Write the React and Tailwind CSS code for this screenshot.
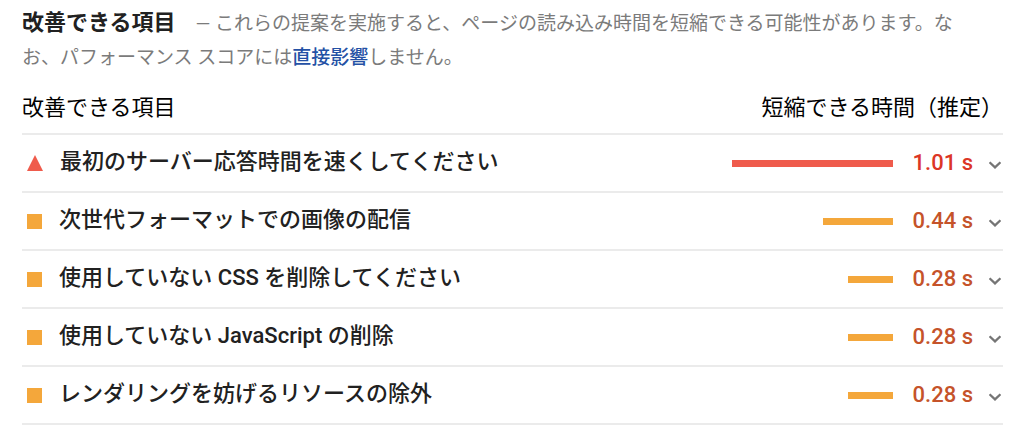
import React, { useState } from 'react';

const opportunities = [
  { id: 'server-response-time', title: '最初のサーバー応答時間を速くしてください', seconds: 1.01, level: 'fail' },
  { id: 'modern-image-formats', title: '次世代フォーマットでの画像の配信', seconds: 0.44, level: 'average' },
  { id: 'unused-css-rules', title: '使用していない CSS を削除してください', seconds: 0.28, level: 'average' },
  { id: 'unused-javascript', title: '使用していない JavaScript の削除', seconds: 0.28, level: 'average' },
  { id: 'render-blocking', title: 'レンダリングを妨げるリソースの除外', seconds: 0.28, level: 'average' },
];

const maxSeconds = Math.max(...opportunities.map(o => o.seconds));

const LevelIcon = ({ level }) => {
  if (level === 'fail') {
    return (
      <svg className="w-4 h-4 shrink-0" viewBox="0 0 16 16" aria-hidden="true">
        <path d="M8 0 16 16H0Z" fill="#ef5b4c" />
      </svg>
    );
  }
  return <span className="w-[15px] h-[15px] shrink-0 bg-[#f4a73b]" />;
};

const Chevron = ({ open }) => (
  <svg className={`w-3 h-2 shrink-0 ${open ? 'rotate-180' : ''}`} viewBox="0 0 12 8" aria-hidden="true">
    <path d="M0.6 1.2 6 6.4 11.4 1.2" fill="none" stroke="#757575" strokeWidth="2.2" />
  </svg>
);

const OpportunityRow = ({ item, open, onToggle }) => {
  const fail = item.level === 'fail';

  return (
    <li className="border-b-2 border-[#ebebeb]">
      <button
        type="button"
        aria-expanded={open}
        onClick={onToggle}
        className="flex w-full h-14 items-center pl-[5px] pr-0.5 text-left font-medium"
      >
        <LevelIcon level={item.level} />
        <span className="flex-1 pl-[17px] pb-0.5 text-[#212121]">{item.title}</span>
        <span className="flex w-[161px] justify-end">
          <span
            className={`h-[7px] ${fail ? 'bg-[#ef5b4c]' : 'bg-[#f4a73b]'}`}
            style={{ width: `${(item.seconds / maxSeconds) * 100}%` }}
          />
        </span>
        <span className={`w-20 text-right whitespace-nowrap ${fail ? 'text-[#dc3626]' : 'text-[#c5532a]'}`}>
          {item.seconds.toFixed(2)} s
        </span>
        <span className="pl-4 pt-1">
          <Chevron open={open} />
        </span>
      </button>
    </li>
  );
};

const App = () => {
  const [openId, setOpenId] = useState(null);

  const toggle = (id) => setOpenId(openId === id ? null : id);

  return (
    <main className="bg-white pl-[22px] pr-[21px] pt-1.5 pb-3 font-[Roboto,'Noto_Sans_CJK_JP',sans-serif] text-[22px] leading-8">
      <div className="pr-4 text-[19px] leading-[34px] text-[#7b7b7b]">
        <h2 className="inline mr-5 text-[22px] font-bold text-[#212121]">改善できる項目</h2>
        <p className="inline">
          — これらの提案を実施すると、ページの読み込み時間を短縮できる可能性があります。なお、パフォーマンス スコアには
          <a href="#performance" className="font-medium text-[#2451a5]">直接影響</a>
          しません。
        </p>
      </div>

      <div className="flex justify-between border-b-2 border-[#ebebeb] pt-[17px] pb-[9px] text-black">
        <span>改善できる項目</span>
        <span>短縮できる時間（推定）</span>
      </div>

      <ul>
        {opportunities.map(item => (
          <OpportunityRow
            key={item.id}
            item={item}
            open={openId === item.id}
            onToggle={() => toggle(item.id)}
          />
        ))}
      </ul>
    </main>
  );
};

export default App;
